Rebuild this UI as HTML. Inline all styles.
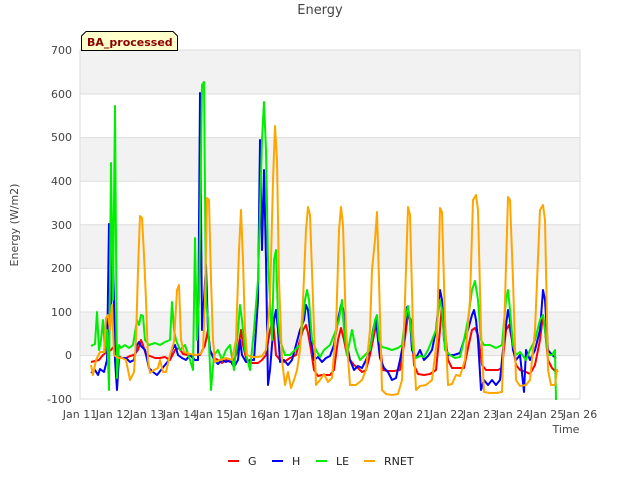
<!DOCTYPE html>
<html><head><meta charset="utf-8"><style>
html,body{margin:0;padding:0;background:#fff;}
svg{display:block;font-family:"DejaVu Sans","Liberation Sans",sans-serif;}
</style></head><body>
<svg width="640" height="480" viewBox="0 0 640 480" xmlns="http://www.w3.org/2000/svg">
<rect x="80" y="50" width="500" height="349" fill="#fff" stroke="#ddd"/>
<g fill="#f2f2f2">
<rect x="80.5" y="50.5" width="499" height="43.6"/>
<rect x="80.5" y="137.7" width="499" height="43.6"/>
<rect x="80.5" y="224.9" width="499" height="43.6"/>
<rect x="80.5" y="312.1" width="499" height="43.6"/>
</g>
<g stroke="#ddd" stroke-width="1">
<line x1="80" y1="94" x2="580" y2="94"/><line x1="80" y1="137.6" x2="580" y2="137.6"/>
<line x1="80" y1="181.2" x2="580" y2="181.2"/><line x1="80" y1="224.8" x2="580" y2="224.8"/>
<line x1="80" y1="268.4" x2="580" y2="268.4"/><line x1="80" y1="312" x2="580" y2="312"/>
<line x1="80" y1="355.6" x2="580" y2="355.6"/>
</g>
<g font-size="11" fill="#444" text-anchor="end">
<text x="72" y="54">700</text><text x="72" y="98">600</text><text x="72" y="141">500</text>
<text x="72" y="185">400</text><text x="72" y="229">300</text><text x="72" y="272">200</text>
<text x="72" y="316">100</text><text x="72" y="359">0</text><text x="72" y="403">-100</text>
</g>
<g font-size="11" fill="#444" text-anchor="middle">
<text x="80" y="418">Jan 11</text><text x="113" y="418">Jan 12</text><text x="147" y="418">Jan 13</text>
<text x="180" y="418">Jan 14</text><text x="213" y="418">Jan 15</text><text x="247" y="418">Jan 16</text>
<text x="280" y="418">Jan 17</text><text x="313" y="418">Jan 18</text><text x="347" y="418">Jan 19</text>
<text x="380" y="418">Jan 20</text><text x="413" y="418">Jan 21</text><text x="447" y="418">Jan 22</text>
<text x="480" y="418">Jan 23</text><text x="513" y="418">Jan 24</text><text x="547" y="418">Jan 25</text>
<text x="580" y="418">Jan 26</text>
</g>
<text x="566" y="433" font-size="11" fill="#444" text-anchor="middle">Time</text>
<text x="18" y="225" font-size="11" fill="#444" text-anchor="middle" transform="rotate(-90 18 225)">Energy (W/m2)</text>
<text x="320" y="14" font-size="13" fill="#444" text-anchor="middle">Energy</text>
<g fill="none" stroke-width="2" stroke-linejoin="round">
<polyline stroke="#ff0000" points="91,362 95,361 99,360 103,355 107,352 111,350 115,345 118,356 122,358 126,358 130,356 134,355 138,350 141,340 143,345 146,355 150,356 155,358 160,358 165,357 170,360 175,350 179,348 183,354 188,355 195,355 200,355 205,345 208,330 210,350 214,358 218,360 222,363 226,360 230,362 234,360 238,350 241,330 243,345 247,362 252,363 258,363 262,360 266,355 270,330 273,320 276,355 280,360 284,362 290,358 296,355 300,340 303,330 306,325 308,333 311,350 314,370 318,376 322,375 326,375 330,375 334,370 338,340 341,328 344,340 347,355 350,360 354,365 358,368 362,372 366,370 370,355 374,335 377,322 380,345 383,370 388,371 394,371 400,370 404,345 408,315 411,320 414,365 418,374 424,375 430,374 436,370 440,330 442,305 445,330 448,360 452,368 458,368 464,368 468,348 472,330 475,328 478,335 482,365 486,370 492,370 498,370 502,368 506,330 509,325 512,340 516,365 520,370 526,372 530,374 535,365 540,340 543,315 545,330 548,360 552,368 556,372"/>
<polyline stroke="#0000ff" points="91,373 95,370 98,375 100,369 104,372 107,360 109,224 110,226 111,310 112,281 113,260 114,300 115,360 117,390 119,358 122,358 126,358 130,362 134,360 137,345 139,342 141,346 145,350 149,368 153,372 157,375 161,370 165,365 169,360 172,350 175,345 178,355 182,358 186,360 190,355 195,360 198,360 200,93 202,330 204,300 206,265 208,330 210,350 214,360 218,364 222,360 226,362 230,360 234,367 238,360 240,340 242,355 246,362 250,360 254,360 258,300 260,140 262,250 264,170 266,260 268,385 270,370 272,345 274,320 276,310 278,330 280,362 284,360 288,365 292,360 296,345 300,330 304,320 306,305 308,310 311,340 314,360 318,357 322,362 326,358 330,356 334,345 338,320 341,305 343,308 346,340 350,360 354,370 358,366 362,368 366,360 370,350 373,330 376,318 378,340 380,358 384,368 388,372 392,380 396,378 400,360 404,340 407,307 410,320 412,350 416,358 420,350 424,360 428,356 432,350 436,330 440,290 442,300 444,340 448,355 454,355 460,353 464,340 468,330 472,315 474,310 476,320 478,340 481,390 484,380 488,385 492,380 496,385 500,380 504,340 508,310 510,320 513,350 516,360 520,355 524,392 526,350 530,360 535,350 540,330 543,290 545,300 548,350 552,355 556,358"/>
<polyline stroke="#00ee00" points="91,346 95,344 97,312 99,350 101,340 103,320 105,352 107,330 109,390 111,163 113,300 115,106 117,378 119,345 121,348 125,345 129,348 133,345 137,320 139,325 141,315 143,316 145,340 149,345 155,343 160,345 165,342 170,340 172,302 174,330 176,340 180,350 185,345 190,360 193,370 195,238 197,340 199,300 202,85 204,82 206,300 208,320 211,390 214,355 218,350 222,360 226,350 230,345 234,370 238,330 240,305 242,320 245,350 250,370 254,330 258,280 262,140 264,102 266,150 268,260 270,300 272,340 274,260 276,250 278,320 280,340 285,355 290,355 295,350 300,345 305,300 307,290 309,300 312,340 316,350 320,357 324,350 330,345 336,330 339,320 342,300 344,330 347,355 352,330 356,350 360,360 365,355 370,350 375,320 377,315 379,340 382,347 386,348 392,350 398,348 402,345 405,320 408,306 410,320 413,350 416,358 420,356 424,357 428,350 432,340 436,330 440,300 442,310 445,350 450,355 455,358 460,357 464,340 468,320 472,290 475,281 478,300 481,340 484,345 490,345 496,348 502,345 506,300 508,290 510,310 513,345 516,355 520,352 526,360 530,350 535,340 540,320 543,315 545,330 548,355 552,355 555,350 556,400"/>
<polyline stroke="#ffa500" points="91,365 93,375 96,360 100,352 104,352 106,318 108,315 110,330 112,305 114,355 118,358 122,358 126,360 130,380 134,372 136,340 138,270 140,216 142,218 144,255 146,300 148,360 150,373 154,370 158,368 160,360 163,372 166,372 170,355 174,342 177,290 179,285 181,340 184,352 190,354 196,355 200,354 203,350 205,300 207,198 209,200 211,280 213,340 215,362 220,360 226,358 232,360 236,340 239,250 241,210 243,260 245,330 247,355 252,357 258,357 262,356 266,350 270,300 273,180 275,126 277,160 279,280 282,360 285,385 288,372 291,388 294,380 297,370 300,350 303,300 306,230 308,207 310,215 313,300 316,385 320,380 324,374 328,382 332,378 336,330 339,230 341,207 343,225 346,330 350,385 356,385 362,380 366,370 370,330 372,270 375,240 377,212 379,280 382,390 386,394 392,395 398,394 402,380 405,300 408,207 410,215 413,330 416,390 420,386 426,385 432,380 437,340 440,208 442,212 445,320 448,385 452,384 456,375 460,376 465,360 470,300 473,200 476,195 478,210 481,330 484,392 490,393 496,393 502,392 505,300 508,197 510,200 513,280 516,380 520,386 526,385 530,380 535,330 540,210 543,205 545,220 548,370 551,385 555,385 557,370 558,372"/>
</g>
<path d="M81.5,50.5 V36 L86,31.5 H173 L177.5,36 V50.5 Z" fill="#ffffcc" stroke="#000"/>
<text x="87" y="46" font-size="11" font-weight="bold" fill="#8b0000">BA_processed</text>
<g stroke-width="2">
<line x1="228" y1="461" x2="239" y2="461" stroke="#ff0000"/>
<line x1="272" y1="461" x2="283" y2="461" stroke="#0000ff"/>
<line x1="316" y1="461" x2="327" y2="461" stroke="#00ee00"/>
<line x1="364" y1="461" x2="375" y2="461" stroke="#ffa500"/>
</g>
<g font-size="11" fill="#222">
<text x="248" y="465">G</text><text x="292" y="465">H</text>
<text x="336" y="465">LE</text><text x="384" y="465">RNET</text>
</g>
</svg>
</body></html>
